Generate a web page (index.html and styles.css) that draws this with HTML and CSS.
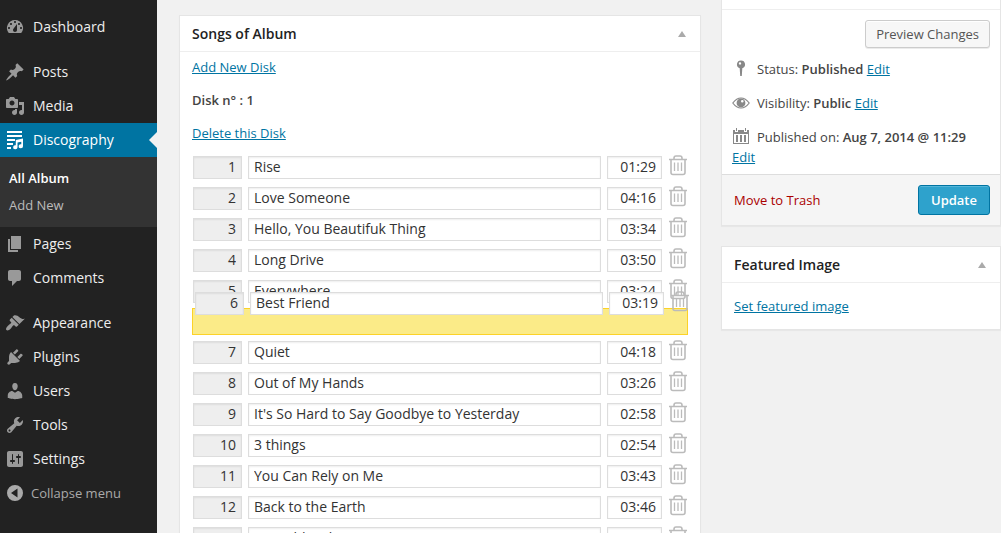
FILE: index.html
```html
<!DOCTYPE html>
<html lang="en">
<head>
<meta charset="utf-8">
<title>Edit Album</title>
<link rel="stylesheet" href="styles.css">
</head>
<body>
<svg class="defs" aria-hidden="true">
  <symbol id="trash" viewBox="0 0 18 21">
    <path d="M0 4.500h18M5 4.500V3.200Q5 1 7 1h4Q13 1 13 3.200V4.500M2 4.500V17.500Q2 19.500 4 19.500H14Q16 19.500 16 17.500V4.500" fill="none" stroke="#bbb" stroke-width="1.600"/>
    <path d="M5.500 7.500v8.500M9 7.500v8.500M12.500 7.500v8.500" fill="none" stroke="#bbb" stroke-width="1.300"/>
  </symbol>
</svg>
<div class="app">
  <nav class="menu" aria-label="Main menu">
    <a class="item" href="#"><svg viewBox="0 0 20 20"><path d="M3.760 16h12.480A7.998 7.998 0 0 0 10 3a7.998 7.998 0 0 0-6.240 13zM10 4c.55 0 1 .45 1 1s-.45 1-1 1-1-.45-1-1 .45-1 1-1zM6 6c.55 0 1 .45 1 1s-.45 1-1 1-1-.45-1-1 .45-1 1-1zm8 0c.55 0 1 .45 1 1s-.45 1-1 1-1-.45-1-1 .45-1 1-1zm-5.370 5.550L12 7v6c0 1.100-.9 2-2 2s-2-.9-2-2c0-.57.24-1.080.63-1.450zM4 10c.55 0 1 .45 1 1s-.45 1-1 1-1-.45-1-1 .45-1 1-1zm12 0c.55 0 1 .45 1 1s-.45 1-1 1-1-.45-1-1 .45-1 1-1z"/></svg>Dashboard</a>
    <a class="item spaced" href="#"><svg viewBox="0 0 20 20"><path d="M10.440 3.020l1.820-1.820 6.360 6.350-1.830 1.820c-1.050-.68-2.480-.57-3.410.36l-.75.75c-.92.93-1.040 2.350-.35 3.410l-1.830 1.820-2.410-2.410-2.800 2.790c-.42.42-3.380 2.710-3.800 2.290s1.860-3.390 2.280-3.810l2.790-2.790L4.100 9.360l1.830-1.820c1.050.69 2.480.57 3.400-.36l.75-.75c.93-.92 1.050-2.350.36-3.410z"/></svg>Posts</a>
    <a class="item" href="#"><svg viewBox="0 0 20 20"><path d="M13 11V4c0-.55-.45-1-1-1h-1.670L9 1H5L3.670 3H2c-.55 0-1 .45-1 1v7c0 .55.45 1 1 1h10c.55 0 1-.45 1-1zM7 4.500c1.380 0 2.500 1.120 2.500 2.500S8.380 9.500 7 9.500 4.500 8.380 4.500 7 5.620 4.500 7 4.500zM14 6h5v10.500c0 1.380-1.120 2.500-2.500 2.500S14 17.880 14 16.500s1.120-2.500 2.500-2.500c.17 0 .34.02.5.05V9h-3V6zm-4 8.050V13h2v3.500c0 1.380-1.120 2.500-2.500 2.500S7 17.880 7 16.500 8.120 14 9.500 14c.17 0 .34.02.5.05z"/></svg>Media</a>
    <a class="item current" href="#" aria-current="page"><svg viewBox="0 0 20 20"><path d="M2 1h15v2H2zM2 5h15v2H2zM2 9h8v2H2zM2 13h6v2H2zM2 17h4v2H2zM18 8.500v7.700a2.200 2 0 1 1-1.700-1.900v-2.500l-3.800.8v4.600a2.200 2 0 1 1-1.700-1.900v-5.200z"/></svg>Discography</a>
    <div class="submenu">
      <a class="here" href="#">All Album</a>
      <a href="#">Add New</a>
    </div>
    <a class="item" href="#"><svg viewBox="0 0 20 20"><path d="M6 15V2h10v13H6zm-1 1h8v2H3V5h2v11z"/></svg>Pages</a>
    <a class="item" href="#"><svg viewBox="0 0 20 20"><path d="M5 2h9c1.100 0 2 .9 2 2v7c0 1.100-.9 2-2 2h-2l-5 5v-5H5c-1.100 0-2-.9-2-2V4c0-1.100.9-2 2-2z"/></svg>Comments</a>
    <a class="item spaced" href="#"><svg viewBox="0 0 20 20"><path d="M14.480 11.060L7.410 3.990l1.500-1.500c.5-.56 2.300-.47 3.510.32 1.210.8 1.430 1.280 2.910 2.100 1.180.64 2.450 1.260 4.450.85zm-.71.71L6.700 4.700 4.930 6.470c-.39.39-.39 1.020 0 1.410l1.060 1.060c.39.39.39 1.030 0 1.420-.6.6-1.430 1.110-2.210 1.690-.35.26-.7.53-1.010.84C1.430 14.230.4 16.080 1.400 17.070c.99 1 2.840-.03 4.180-1.360.31-.31.58-.66.85-1.020.57-.78 1.080-1.610 1.690-2.210.39-.39 1.020-.39 1.410 0l1.060 1.060c.39.39 1.020.39 1.410 0z"/></svg>Appearance</a>
    <a class="item" href="#"><svg viewBox="0 0 20 20"><path d="M13.110 4.360L9.870 7.600 8 5.730l3.240-3.240c.35-.34 1.050-.2 1.560.32.52.51.66 1.210.31 1.550zm-8 1.770l.91-1.120 9.010 9.010-1.190.84c-.71.71-2.630 1.160-3.820 1.160H6.140L4.900 17.260c-.59.59-1.540.59-2.120 0-.59-.58-.59-1.530 0-2.120l1.240-1.240v-3.880c0-1.130.4-3.190 1.090-3.890zm7.260 3.970l3.240-3.240c.34-.35 1.040-.21 1.550.31.52.51.66 1.210.31 1.550l-3.240 3.250z"/></svg>Plugins</a>
    <a class="item" href="#"><svg viewBox="0 0 20 20"><path d="M10 9.250c-2.270 0-2.730-3.440-2.730-3.440C7 4.020 7.820 2 9.970 2c2.160 0 2.980 2.020 2.710 3.810 0 0-.41 3.440-2.680 3.440zm0 2.570L12.720 10c2.390 0 4.520 2.330 4.520 4.530v2.490s-3.650 1.130-7.240 1.130c-3.650 0-7.240-1.130-7.240-1.130v-2.490c0-2.250 1.940-4.480 4.470-4.480z"/></svg>Users</a>
    <a class="item" href="#"><svg viewBox="0 0 20 20"><path d="M16.680 9.770c-1.340 1.340-3.300 1.670-4.950.99l-5.410 6.520c-.99.99-2.590.99-3.580 0s-.99-2.590 0-3.570l6.520-5.420c-.68-1.650-.35-3.610.99-4.950 1.280-1.280 3.120-1.620 4.720-1.060l-2.890 2.890 2.820 2.820 2.860-2.870c.53 1.580.18 3.390-1.080 4.650zM3.810 16.210c.4.39 1.040.39 1.430 0 .4-.4.4-1.040 0-1.430-.39-.4-1.030-.4-1.430 0-.39.39-.39 1.030 0 1.430z"/></svg>Tools</a>
    <a class="item" href="#"><svg viewBox="0 0 20 20"><path d="M18 16V4c0-1.100-.9-2-2-2H4c-1.100 0-2 .9-2 2v12c0 1.100.9 2 2 2h12c1.100 0 2-.9 2-2zM8 11h1c.55 0 1 .45 1 1s-.45 1-1 1H8v1.500c0 .28-.22.5-.5.5s-.5-.22-.5-.5V13H6c-.55 0-1-.45-1-1s.45-1 1-1h1V5.500c0-.28.22-.5.5-.5s.5.22.5.5V11zm5-2h-1c-.55 0-1-.45-1-1s.45-1 1-1h1V5.500c0-.28.22-.5.5-.5s.5.22.5.5V7h1c.55 0 1 .45 1 1s-.45 1-1 1h-1v5.500c0 .28-.22.5-.5.5s-.5-.22-.5-.5V9z"/></svg>Settings</a>
    <button class="item collapse" type="button"><svg viewBox="0 0 20 20"><path fill-rule="evenodd" d="M10 2a8 8 0 1 1 0 16 8 8 0 0 1 0-16zM12.500 5.500v9L6 10z"/></svg>Collapse menu</button>
  </nav>

  <main class="content">
    <section class="box songs">
      <header class="box-head"><h2>Songs of Album</h2><button class="toggle" type="button" aria-label="Toggle Songs of Album"></button></header>
      <div class="disk">
        <p><a href="#">Add New Disk</a></p>
        <h3>Disk n° : 1</h3>
        <p><a href="#">Delete this Disk</a></p>
      </div>
      <ol class="tracks" id="tracks"></ol>
    </section>

    <aside class="side">
      <section class="box publish">
        <div class="preview"><button class="btn" type="button">Preview Changes</button></div>
        <div class="misc">
          <p><svg viewBox="0 0 20 20"><path fill="#888" fill-rule="evenodd" d="M9 1.500a4 4 0 0 1 1.300 7.800L9.800 17H8.200L7.700 9.300A4 4 0 0 1 9 1.500zM8 3.200a1.200 1.200 0 1 0 0 2.400 1.200 1.200 0 0 0 0-2.400z"/></svg>Status: <b>Published</b> <a href="#">Edit</a></p>
          <p><svg viewBox="0 0 20 20"><path fill="none" stroke="#888" stroke-width="1.200" d="M.8 10Q4.500 5 9 5t8.200 5Q13.500 15 9 15T.8 10z"/><path fill="#888" fill-rule="evenodd" d="M9 5.500a4.400 4.400 0 1 1 0 8.800 4.400 4.400 0 0 1 0-8.800zM10.300 7a1.300 1.300 0 1 0 0 2.600 1.300 1.300 0 0 0 0-2.600z"/></svg>Visibility: <b>Public</b> <a href="#">Edit</a></p>
          <p><svg viewBox="0 0 20 20"><path fill="#888" fill-rule="evenodd" d="M1 3h2v2h3V3h6v2h3V3h2v14H1zM2 7v9h14V7z"/><path fill="#888" d="M4 1h1v3H4zM13 1h1v3h-1zM4 8h2v7H4zM8 8h2v7H8zM12 8h2v7h-2z"/></svg>Published on: <b>Aug 7, 2014 @ 11:29</b> <a href="#">Edit</a></p>
        </div>
        <footer class="actions"><a class="delete" href="#">Move to Trash</a><button class="btn primary" type="button">Update</button></footer>
      </section>
      <section class="box">
        <header class="box-head"><h2>Featured Image</h2><button class="toggle" type="button" aria-label="Toggle Featured Image"></button></header>
        <p class="featured"><a href="#">Set featured image</a></p>
      </section>
    </aside>
  </main>
</div>
<script src="tracks.js"></script>
</body>
</html>
```

FILE: styles.css
```css
* { box-sizing: border-box; }
body {
  margin: 0;
  background: #f1f1f1;
  color: #444;
  font: 13px/20px "Open Sans", "Noto Sans", sans-serif;
}
p, h2, h3, ol { margin: 0; padding: 0; }
b { font-weight: 600; }
a { color: #0074a2; }
button { font-family: inherit; cursor: pointer; }
.defs { display: none; }
.app { display: flex; height: 100vh; overflow: hidden; }

.menu { flex: none; width: 157px; padding-top: 10px; background: #222; }
.item {
  display: flex;
  align-items: center;
  gap: 8px;
  height: 34px;
  padding: 0 5px;
  color: #eee;
  font-size: 14px;
  text-decoration: none;
}
.item svg { width: 20px; height: 20px; fill: #999; }
.spaced { margin-top: 11px; }
.current { position: relative; background: #0074a2; color: #fff; }
.current svg { fill: #fff; }
.current::after {
  content: "";
  position: absolute;
  right: 0;
  top: 9px;
  border: 8px solid transparent;
  border-left-width: 0;
  border-right-color: #f1f1f1;
}
.submenu { padding: 8px 9px; background: #333; }
.submenu a {
  display: block;
  color: #bbb;
  line-height: 27px;
  text-decoration: none;
}
.submenu .here { color: #fff; font-weight: 600; }
.collapse {
  gap: 6px;
  width: 100%;
  border: 0;
  background: none;
  color: #aaa;
  font-size: 13px;
}
.collapse svg { fill: #aaa; }

.content {
  flex: 1;
  display: flex;
  align-items: flex-start;
  gap: 20px;
  min-width: 0;
  padding-left: 22px;
}
.box {
  border: 1px solid #e5e5e5;
  background: #fff;
  box-shadow: 0 1px 1px rgba(0, 0, 0, .04);
}
.songs { flex: 1; min-width: 0; margin-top: 15px; }
.box-head {
  display: flex;
  align-items: center;
  justify-content: space-between;
  height: 36px;
  padding: 0 12px;
  border-bottom: 1px solid #eee;
}
h2 { color: #222; font-size: 14px; font-weight: 600; }
h3 { font-size: 13px; font-weight: 600; }
.toggle {
  width: 12px;
  height: 12px;
  padding: 3px 2px;
  border: 0;
  background: none;
}
.toggle::before {
  content: "";
  display: block;
  border: 4px solid transparent;
  border-top-width: 0;
  border-bottom: 6px solid #aaa;
}
.disk { display: grid; gap: 13px; padding: 5px 12px 9px; }

.tracks { position: relative; margin: 0 12px; list-style: none; }
.track {
  display: flex;
  gap: 6px;
  width: 100%;
  padding: 4px 1px;
}
.track input {
  min-width: 0;
  height: 23px;
  padding: 2px 5px 4px;
  border: 1px solid #ddd;
  background: #fff;
  box-shadow: inset 0 1px 2px rgba(0, 0, 0, .07);
  color: #333;
  font: 14px/17px "Open Sans", "Noto Sans", sans-serif;
}
.track .num { width: 49px; background: #eee; text-align: right; }
.track .name { flex: 1; }
.track .time { width: 55px; text-align: right; }
.remove {
  width: 18px;
  height: 21px;
  margin: -1px 0 0 1px;
  padding: 0;
  border: 0;
  background: none;
}
.remove svg { display: block; width: 18px; height: 21px; }
.drop {
  height: 27px;
  margin: 1px 0 2px;
  border: 1px solid #fcd227;
  background: #fbeb88;
}
.dragging { position: absolute; left: 2px; top: 136px; }

.side { flex: none; width: 280px; }
.publish { margin-bottom: 20px; padding-top: 9px; border-top: 0; }
.preview {
  display: flex;
  justify-content: flex-end;
  padding: 10px;
  border-top: 1px solid #eee;
}
.btn {
  height: 28px;
  padding: 0 10px;
  border: 1px solid #ccc;
  border-radius: 3px;
  background: #f7f7f7;
  box-shadow: inset 0 1px 0 #fff, 0 1px 0 rgba(0, 0, 0, .08);
  color: #555;
  font-size: 13px;
}
.primary {
  height: 30px;
  padding: 0 12px;
  border-color: #0074a2;
  background: #2ea2cc;
  box-shadow: inset 0 1px 0 rgba(120, 200, 230, .5);
  color: #fff;
  font-weight: 600;
}
.misc { display: grid; gap: 14px; padding: 1px 10px 7px; }
.misc svg {
  width: 20px;
  height: 20px;
  margin-right: 5px;
  vertical-align: top;
}
.actions {
  display: flex;
  align-items: center;
  justify-content: space-between;
  padding: 10px 10px 10px 12px;
  border-top: 1px solid #ddd;
  background: #f5f5f5;
}
.delete { color: #a00; text-decoration: none; }
.featured { padding: 13px 12px; }
```

FILE: tracks.js
```js
const tracks = [
  ["Rise", "01:29"],
  ["Love Someone", "04:16"],
  ["Hello, You Beautifuk Thing", "03:34"],
  ["Long Drive", "03:50"],
  ["Everywhere", "03:24"],
  ["Best Friend", "03:19"],
  ["Quiet", "04:18"],
  ["Out of My Hands", "03:26"],
  ["It's So Hard to Say Goodbye to Yesterday", "02:58"],
  ["3 things", "02:54"],
  ["You Can Rely on Me", "03:43"],
  ["Back to the Earth", "03:46"],
  ["A World with You", "04:38"]
];
const dragged = 6;
const list = document.getElementById("tracks");

tracks.forEach(([name, time], i) => {
  const n = i + 1;
  const row = document.createElement("li");
  row.className = n === dragged ? "track dragging" : "track";
  row.innerHTML =
    `<input class="num" type="text" aria-label="Track number" value="${n}">` +
    `<input class="name" type="text" aria-label="Title of track ${n}" value="${name}">` +
    `<input class="time" type="text" aria-label="Length of track ${n}" value="${time}">` +
    `<button class="remove" type="button" aria-label="Delete track ${n}"><svg><use href="#trash"/></svg></button>`;
  list.append(row);
  if (n === dragged) {
    const drop = document.createElement("li");
    drop.className = "drop";
    list.append(drop);
  }
});
```
